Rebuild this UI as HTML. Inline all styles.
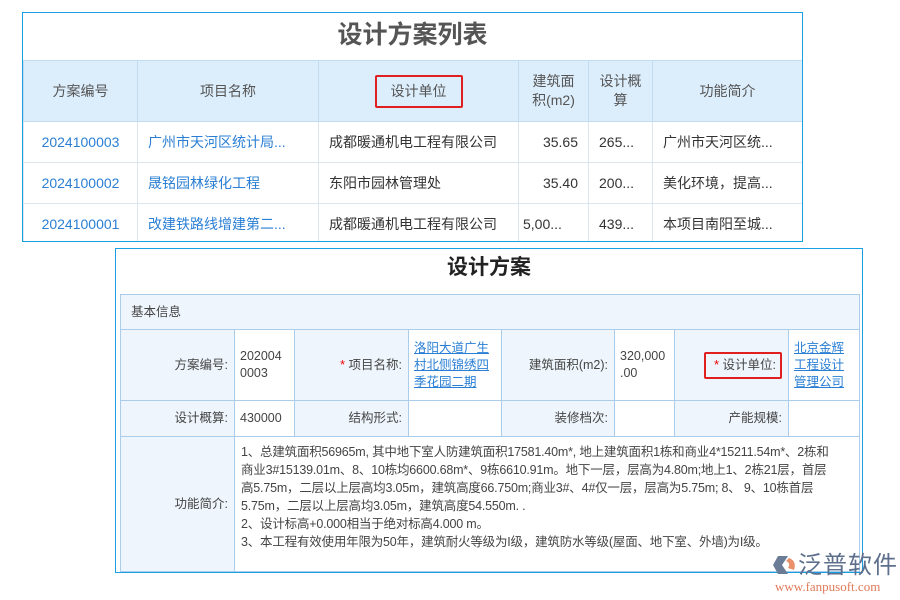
<!DOCTYPE html>
<html><head><meta charset="utf-8"><style>
*{margin:0;padding:0;box-sizing:border-box}
body{width:900px;height:600px;background:#fff;position:relative;overflow:hidden;font-family:"Liberation Sans","Noto Sans CJK SC",sans-serif;color:#333}
.a{position:absolute}
.p1{left:22px;top:12px;width:781px;height:230px;border:1px solid #1a9fe0;background:#fff;overflow:hidden}
.t1{left:0;top:0;width:779px;height:47px;text-align:center;font-size:25px;font-weight:bold;line-height:44px;color:#555}
table{border-collapse:collapse;position:absolute;table-layout:fixed}
.tb1{left:0;top:47px;width:779px}
.tb1 td{border:1px solid #dde6ee;font-size:14px;padding:0 10px;white-space:nowrap;overflow:hidden;line-height:16px}
.tb1 tr.r td{height:41px}
.tb1 tr.h td{background:#dcedfb;height:61px;text-align:center;color:#555;border-color:#c4dcf0;line-height:19px;white-space:normal;padding:0 4px}
.bl{color:#2a7fd4}
.p2{left:115px;top:248px;width:748px;height:325px;border:1px solid #1a9fe0;background:#fff;overflow:hidden}
.t2{left:0;top:0;width:746px;height:45px;text-align:center;font-size:21px;font-weight:bold;line-height:38px;color:#222}
.tb2{left:4px;top:45px;width:739px}
.tb2 td{border:1px solid #a9cdea;font-size:12.5px;color:#444;line-height:17px;vertical-align:middle;overflow:hidden}
.lb{background:#eef5fc;text-align:right;padding-right:6px}
.vl{padding:0 5px}
.rs{color:#e00}
.lk{color:#2a7fd4;text-decoration:underline}
.red{border:2px solid #e02020;border-radius:2px}
</style></head><body>
<div class="a p1">
<div class="a t1">设计方案列表</div>
<table class="tb1">
<colgroup><col style="width:114px"><col style="width:181px"><col style="width:200px"><col style="width:70px"><col style="width:64px"><col style="width:150px"></colgroup>
<tr class="h"><td>方案编号</td><td>项目名称</td><td><span style="display:inline-block;border:2px solid #e02020;border-radius:2px;padding:5px 14px;">设计单位</span></td><td>建筑面<br>积(m2)</td><td>设计概<br>算</td><td>功能简介</td></tr>
<tr class="r"><td class="bl" style="text-align:center">2024100003</td><td class="bl">广州市天河区统计局...</td><td>成都暖通机电工程有限公司</td><td style="text-align:right">35.65</td><td>265...</td><td>广州市天河区统...</td></tr>
<tr class="r"><td class="bl" style="text-align:center">2024100002</td><td class="bl">晟铭园林绿化工程</td><td>东阳市园林管理处</td><td style="text-align:right">35.40</td><td>200...</td><td>美化环境，提高...</td></tr>
<tr class="r"><td class="bl" style="text-align:center">2024100001</td><td class="bl">改建铁路线增建第二...</td><td>成都暖通机电工程有限公司</td><td style="padding:0 4px">5,00...</td><td>439...</td><td>本项目南阳至城...</td></tr>
</table>
</div>
<div class="a p2">
<div class="a t2">设计方案</div>
<table class="tb2">
<colgroup><col style="width:114px"><col style="width:60px"><col style="width:114px"><col style="width:93px"><col style="width:113px"><col style="width:60px"><col style="width:114px"><col style="width:71px"></colgroup>
<tr><td colspan="8" style="background:#eef5fc;height:35px;padding-left:10px">基本信息</td></tr>
<tr style="height:71px"><td class="lb">方案编号:</td><td class="vl">202004<br>0003</td><td class="lb"><span class="rs">* </span>项目名称:</td><td class="vl"><span class="lk">洛阳大道广生<br>村北侧锦绣四<br>季花园二期</span></td><td class="lb">建筑面积(m2):</td><td class="vl">320,000<br>.00</td><td class="lb"><span class="red" style="display:inline-block;padding:3px 4px 3px 8px"><span class="rs">* </span>设计单位:</span></td><td class="vl"><span class="lk">北京金辉<br>工程设计<br>管理公司</span></td></tr>
<tr style="height:36px"><td class="lb">设计概算:</td><td class="vl">430000</td><td class="lb">结构形式:</td><td></td><td class="lb">装修档次:</td><td></td><td class="lb">产能规模:</td><td></td></tr>
<tr style="height:132px"><td class="lb">功能简介:</td><td colspan="7" style="height:132px;padding:6px 4px 20px 6px;vertical-align:top;line-height:18px;white-space:nowrap;letter-spacing:-0.2px">1、总建筑面积56965m, 其中地下室人防建筑面积17581.40m*, 地上建筑面积1栋和商业4*15211.54m*、2栋和<br>商业3#15139.01m、8、10栋均6600.68m*、9栋6610.91m。地下一层，层高为4.80m;地上1、2栋21层，首层<br>高5.75m，二层以上层高均3.05m，建筑高度66.750m;商业3#、4#仅一层，层高为5.75m; 8、 9、10栋首层<br>5.75m，二层以上层高均3.05m，建筑高度54.550m. .<br>2、设计标高+0.000相当于绝对标高4.000 m。<br>3、本工程有效使用年限为50年，建筑耐火等级为I级，建筑防水等级(屋面、地下室、外墙)为I级。</td></tr>
<tr style="height:20px"><td class="lb"></td><td colspan="7"></td></tr>
</table>
</div>
<div class="a" style="left:772px;top:552px;width:26px;height:26px">
<svg width="26" height="26" viewBox="0 0 26 26"><path d="M6 4 L16 4 L10 13 L16 22 L6 22 L1 13 Z" fill="#6b7c96"/><path d="M17 6 Q25 9 22 18 L16 16 Q19 11 14 9 Z" fill="#e8916a"/></svg></div>
<div class="a" style="left:798px;top:552px;font-size:24px;color:#5d6f8c;letter-spacing:1px;line-height:28px">泛普软件</div>
<div class="a" style="left:775px;top:580px;font-size:13px;color:#e07a5a;font-family:'Liberation Serif',serif;line-height:14px">www.fanpusoft.com</div>
</body></html>
